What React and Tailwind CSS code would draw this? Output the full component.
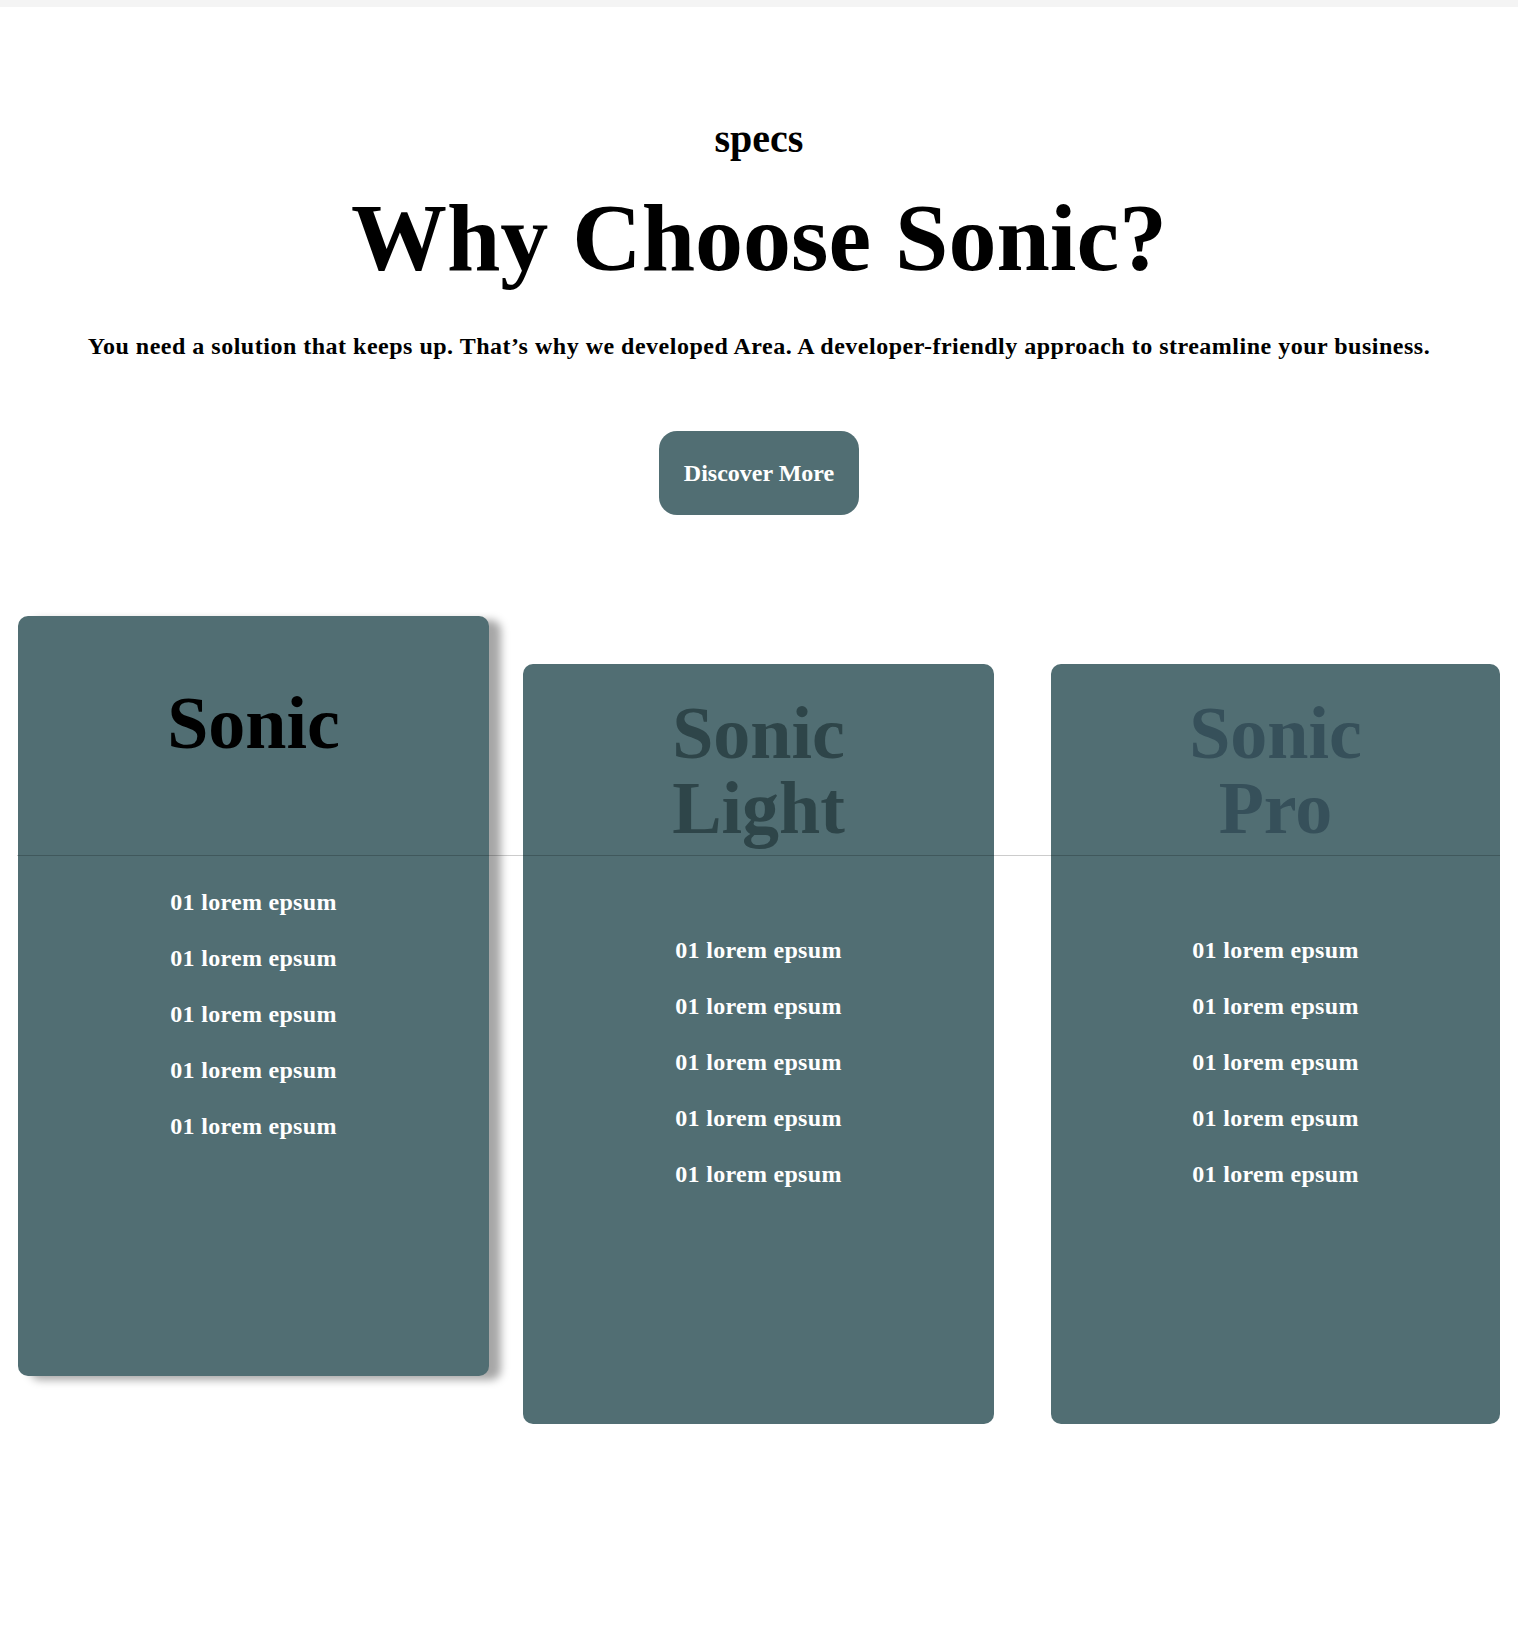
const features = ["01 lorem epsum", "01 lorem epsum", "01 lorem epsum", "01 lorem epsum", "01 lorem epsum"];

const plans = [
    { name: ["Sonic"], titleColor: "text-black", width: "w-[471px]", wrap: "mt-0 ml-[18px] shadow-[12px_4px_8px_rgba(0,0,0,0.35)]" },
    { name: ["Sonic", "Light"], titleColor: "text-[#2e4549]", width: "w-[471px]", wrap: "mt-[48px] ml-[34px]" },
    { name: ["Sonic", "Pro"], titleColor: "text-[#36505a]", width: "w-[449px]", wrap: "mt-[48px] ml-[57px]" },
];

function PlanCard({ plan }) {
    return (
        <div className={`${plan.width} ${plan.wrap} h-[760px] shrink-0 rounded-[10px] bg-[#516e73]`}>
            <div className="h-[214px] flex items-center justify-center">
                <h3 className={`text-center text-[74px] leading-[75px] font-bold ${plan.titleColor}`}>
                    {plan.name.map((line) => (
                        <span key={line} className="block">{line}</span>
                    ))}
                </h3>
            </div>
            <ul className="mt-[44px] text-center">
                {features.map((f, i) => (
                    <li key={i} className="text-[24px] leading-[56px] font-bold tracking-[0.3px] text-white">{f}</li>
                ))}
            </ul>
        </div>
    );
}

export default function App() {
    return (
        <div className="min-h-[1630px] bg-white font-['Liberation_Serif',_'Times_New_Roman',_serif] text-black">
            <div className="h-[7px] bg-[#f4f4f4]" />
            <section className="pt-[108px] text-center">
                <p className="text-[40px] leading-[48px] font-bold">specs</p>
                <h1 className="mt-[27px] text-[96px] leading-none font-bold">Why Choose Sonic?</h1>
                <p className="mt-[45px] text-[24px] leading-[30px] font-bold tracking-[0.5px]">
                    You need a solution that keeps up. That’s why we developed Area. A developer-friendly approach to streamline your business.
                </p>
                <button
                    type="button"
                    className="mt-[70px] w-[200px] h-[84px] rounded-[18px] bg-[#516e73] text-white text-[24px] font-bold"
                >
                    Discover More
                </button>
            </section>
            <div className="relative mt-[101px] flex items-start">
                {plans.map((p) => (
                    <PlanCard key={p.name.join(" ")} plan={p} />
                ))}
                <div className="absolute left-[17px] right-[18px] top-[239px] h-px bg-black/20" />
            </div>
        </div>
    );
}
